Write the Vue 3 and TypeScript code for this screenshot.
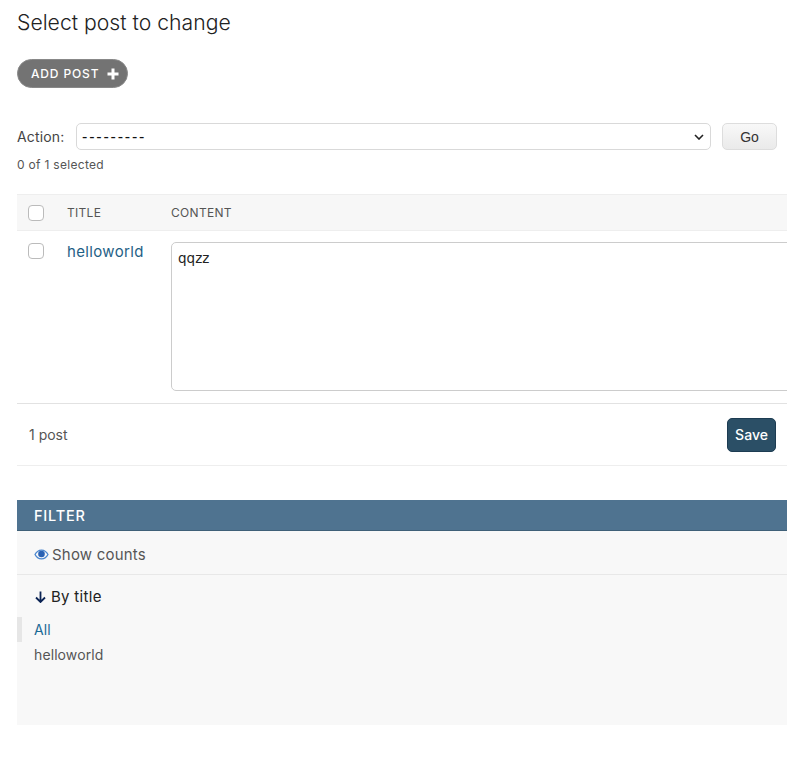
<script setup lang="ts">
const title = 'Select post to change'
</script>

<template>
  <div class="page">
    <h1 class="title">{{ title }}</h1>
    <div class="tools">
      <a class="add">
        <span>ADD POST</span>
        <svg width="12" height="12" viewBox="0 0 12 12"><path d="M4.500 0.500h3v4h4v3h-4v4h-3v-4h-4v-3h4z" fill="#fff" /></svg>
      </a>
    </div>
    <div class="actions">
      <span class="action-label">Action:</span>
      <div class="select">
        <span>---------</span>
        <svg width="10" height="6" viewBox="0 0 10 6"><path d="M1 1l4 4 4-4" fill="none" stroke="#222" stroke-width="1.600" /></svg>
      </div>
      <button class="go">Go</button>
    </div>
    <div class="count">0 of 1 selected</div>

    <div class="table">
      <div class="thead">
        <span class="check-cell"><i class="check"></i></span>
        <span class="th-title">TITLE</span>
        <span>CONTENT</span>
      </div>
      <div class="row">
        <span class="check-cell row-check"><i class="check"></i></span>
        <a class="link">helloworld</a>
        <div class="textarea-clip"><div class="textarea">qqzz</div></div>
      </div>
    </div>

    <div class="paginator">
      <span>1 post</span>
      <button class="save">Save</button>
    </div>

    <div class="filter">
      <div class="filter-head">FILTER</div>
      <div class="counts">
        <svg width="15" height="11" viewBox="0 0 15 11"><path fill-rule="evenodd" d="M7.500 0.500C4.300 0.500 1.700 2.500 0.300 5.500c1.400 3 4 5 7.200 5s5.800-2 7.200-5C13.300 2.500 10.700 0.500 7.500 0.500zM7.500 1.700c2.500 0 4.500 1.500 5.800 3.800-1.300 2.300-3.300 3.800-5.800 3.800S3 7.800 1.700 5.500C3 3.200 5 1.700 7.500 1.700z" fill="#4a86cf" /><circle cx="7.500" cy="5" r="3.300" fill="#2a62b4" /></svg>
        <span>Show counts</span>
      </div>
      <div class="by">
        <svg width="11" height="12" viewBox="0 0 11 12"><path d="M5.500 0.500v10M1 6.500l4.500 4.500L10 6.500" fill="none" stroke="#0c2454" stroke-width="1.800" /></svg>
        <span>By title</span>
      </div>
      <ul class="choices">
        <li class="selected">All</li>
        <li>helloworld</li>
      </ul>
    </div>
  </div>
</template>

<style>
html, body { margin: 0; background: #fff; }
</style>

<style scoped>
.page { width: 770px; height: 767px; margin-left: 17px; overflow: hidden; font-family: Inter, "Liberation Sans", sans-serif; color: #333; }
.title { margin: 0; padding-top: 8px; font-size: 21.200px; line-height: 28px; font-weight: 300; color: #222; }
.tools { margin-top: 23px; display: flex; }
.add { height: 29px; box-sizing: border-box; padding: 0 8px 0 13px; display: flex; align-items: center; gap: 8px; border-radius: 15px; background: #737373; border: 1px solid #888; color: #fff; font-size: 12px; font-weight: 500; letter-spacing: 0.850px; }
.actions { margin-top: 35px; display: flex; align-items: center; height: 27px; padding-right: 10px; }
.action-label { font-size: 14px; width: 59px; color: #444; letter-spacing: 0.150px; }
.select { width: 635px; height: 27px; box-sizing: border-box; border: 1px solid #d9d9d9; border-radius: 5px; display: flex; align-items: center; justify-content: space-between; padding: 0 6px 0 5px; font: 16px "Liberation Sans", sans-serif; color: #111; letter-spacing: 1.800px; }
.go { width: 55px; height: 27px; margin-left: 11px; border: 1px solid #ddd; border-radius: 5px; background: linear-gradient(#f8f8f8, #eaeaea); font: 14px "Liberation Sans", sans-serif; color: #333; padding: 0; }
.count { margin-top: 7px; font-size: 12px; line-height: 16px; color: #555; letter-spacing: 0.300px; }
.table { margin-top: 21px; }
.thead { height: 37px; box-sizing: border-box; display: flex; align-items: center; background: #f7f7f7; border-top: 1px solid #eee; border-bottom: 1px solid #eee; font-size: 12px; letter-spacing: 0.300px; color: #555; }
.check-cell { width: 50px; padding-left: 11px; box-sizing: border-box; display: flex; flex: none; }
.check { display: block; width: 16px; height: 16px; box-sizing: border-box; border: 1px solid #bbb; border-radius: 4px; background: #fff; }
.th-title { width: 104px; }
.row { height: 173px; box-sizing: border-box; display: flex; align-items: flex-start; border-bottom: 1px solid #e2e2e2; }
.row-check { margin-top: 12px; }
.link { width: 104px; margin-top: 11px; font-size: 15px; line-height: 20px; font-weight: 400; letter-spacing: 0.350px; color: #1f6186; }
.textarea-clip { flex: 1; min-width: 0; overflow: hidden; margin-top: 11px; }
.textarea { width: 700px; height: 149px; box-sizing: border-box; border: 1px solid #ccc; border-radius: 5px; padding: 7px 6px; font: 13.500px/16px "DejaVu Sans", sans-serif; color: #222; }
.paginator { height: 62px; box-sizing: border-box; display: flex; align-items: center; justify-content: space-between; padding: 0 11px 0 12px; border-bottom: 1px solid #eee; font-size: 14px; color: #555; }
.save { width: 49px; height: 34px; border: 1px solid #1d3c52; border-radius: 5px; background: #2b4f66; color: #fff; font: 500 14px Inter, sans-serif; padding: 0; }
.filter { margin-top: 34px; height: 225px; background: #f8f8f8; }
.filter-head { height: 31px; box-sizing: border-box; padding-left: 17px; background: #4f7390; border-bottom: 1px solid #3f6078; color: #fff; font-size: 14.500px; font-weight: 500; line-height: 31px; letter-spacing: 0.800px; }
.counts { height: 44px; box-sizing: border-box; display: flex; align-items: center; gap: 3px; padding: 3px 0 0 17px; border-bottom: 1px solid #e8e8e8; font-size: 15px; letter-spacing: 0.200px; color: #555; }
.by { display: flex; align-items: center; gap: 5px; padding: 13px 0 0 18px; font-size: 15px; line-height: 18px; letter-spacing: 0.300px; color: #222; }
.choices { list-style: none; margin: 11px 0 0; padding: 0; font-size: 14px; color: #555; }
.choices li { height: 25px; line-height: 25px; padding-left: 17px; letter-spacing: 0.100px; }
.choices li.selected { color: #1a6a96; box-shadow: inset 5px 0 #e6e6e6; }
</style>
